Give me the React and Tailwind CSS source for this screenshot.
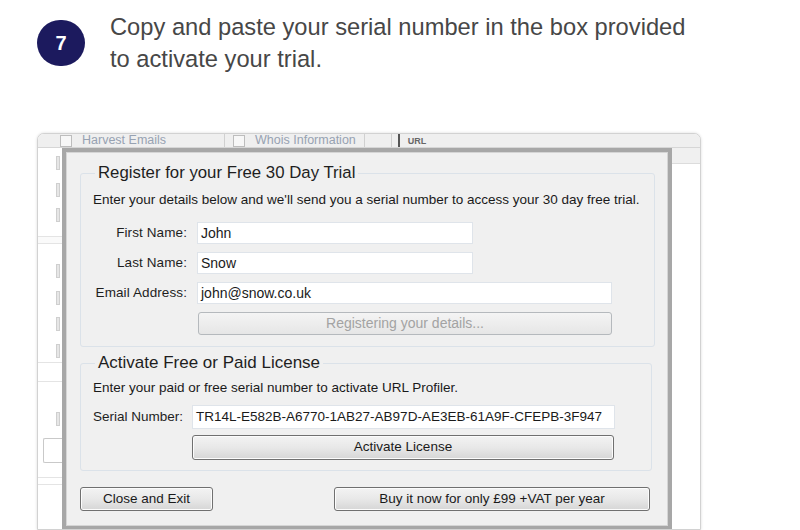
const btn =
  'flex items-center justify-center rounded-[3px] border border-[#707070] bg-gradient-to-b from-[#f3f3f3] via-[#e8e8e8] to-[#d6d6d6] text-[13.5px] text-[#1a1a1a] shadow-[inset_0_0_0_1px_#fcfcfc]';

function Field({ label, value, width }) {
  return (
    <div className="flex items-center h-[22px]">
      <span className="w-[106px] text-right text-[13.5px] tracking-[0.1px] text-[#1e1e1e]">{label}</span>
      <div
        className="ml-[10px] h-[22px] border border-[#dfe4ea] bg-white flex items-center pl-[3px] text-[14px] text-[#1a1a1a]"
        style={{ width }}
      >
        {value}
      </div>
    </div>
  );
}

function Tick({ top }) {
  return <div className="ml-auto mr-[2px] w-[4px] h-[14px] border border-[#cfcfcf] bg-[#e6e6e6]" style={{ marginTop: top }} />;
}

export default function App() {
  return (
    <div className="w-[800px] h-[530px] overflow-hidden bg-white font-['Liberation_Sans',Arial,sans-serif]">
      {/* step heading */}
      <div className="h-[133px] flex items-start pt-[11px] pl-[37px]">
        <div className="mt-[9px] w-[48px] h-[46px] rounded-full bg-[#1c1a5e] flex items-center justify-center text-white font-bold text-[20px]">
          7
        </div>
        <p className="ml-[25px] text-[23.7px] leading-[32px] text-[#474747]">
          Copy and paste your serial number in the box provided
          <br />
          to activate your trial.
        </p>
      </div>

      {/* screenshot of the app */}
      <div className="ml-[37px] w-[664px] h-[397px] border border-[#d2d2d2] rounded-t-[7px] bg-white flex flex-col overflow-hidden shadow-[0_0_3px_rgba(0,0,0,0.15)]">
        <div className="h-[14px] shrink-0 bg-[#efefef] border-b border-[#d6d6d6] flex items-center text-[12.5px] leading-[13px] text-[#97a2b2]">
          <div className="ml-[22px] w-[12px] h-[12px] border border-[#bdbdbd] bg-[#f7f7f7]" />
          <span className="ml-[10px] pr-[58px] border-r border-[#d0d0d0]">Harvest Emails</span>
          <div className="ml-[8px] w-[12px] h-[12px] border border-[#bdbdbd] bg-[#f7f7f7]" />
          <span className="ml-[10px] pr-[8px] border-r border-[#d0d0d0]">Whois Information</span>
          <div className="w-[27px] h-[13px] border-r border-[#d0d0d0]" />
          <div className="w-[8px] h-[13px] border-r-2 border-[#555]" />
          <span className="ml-[8px] text-[#666] text-[9px] leading-[10px] font-bold">URL</span>
        </div>

        <div className="flex flex-1 min-h-0">
          {/* background app left column */}
          <div className="w-[24px] shrink-0 flex flex-col">
            <Tick top={8} />
            <Tick top={13} />
            <Tick top={11} />
            <div className="mt-[14px] h-[8px] border-y border-[#e4e4e4] bg-[#fafafa]" />
            <Tick top={20} />
            <Tick top={13} />
            <Tick top={12} />
            <Tick top={13} />
            <div className="mt-[4px] h-[20px] border-y border-[#e4e4e4]" />
            <Tick top={30} />
            <div className="mt-[12px] ml-[5px] h-[25px] border border-r-0 border-[#c9c9c9] rounded-l-[2px] bg-white" />
            <div className="mt-[14px] h-[8px] border-y border-[#e4e4e4]" />
          </div>

          {/* registration dialog */}
          <div className="w-[610px] shrink-0 border-[4px] border-b-[3px] border-[#a7a7a7] bg-[#f0f0f0] pt-[12px] pl-[14px] pr-[13px] shadow-[inset_0_0_0_1px_#d5d5d5]">
            <fieldset className="w-[575px] border border-[#dbe2e9] rounded-[3px] pl-[12px] pb-[11px]">
              <legend className="ml-[2px] px-[3px] text-[16.8px] leading-[18px] text-[#1e1e1e]">
                Register for your Free 30 Day Trial
              </legend>
              <p className="mt-[10px] text-[13.5px] leading-[16px] text-[#1a1a1a]">
                Enter your details below and we'll send you a serial number to access your 30 day free trial.
              </p>
              <div className="mt-[14px] -ml-[12px] flex flex-col gap-[8px]">
                <Field label="First Name:" value="John" width={276} />
                <Field label="Last Name:" value="Snow" width={276} />
                <Field label="Email Address:" value="john@snow.co.uk" width={415} />
                <div className="ml-[117px] w-[414px] h-[23px] flex items-center justify-center rounded-[3px] border border-[#b5b9bd] bg-gradient-to-b from-[#f4f4f4] to-[#e6e6e6] text-[14px] text-[#a3a3a3]">
                  Registering your details...
                </div>
              </div>
            </fieldset>

            <fieldset className="mt-[7px] w-[572px] border border-[#dbe2e9] rounded-[3px] pl-[12px] pb-[10px]">
              <legend className="ml-[2px] px-[3px] text-[17px] leading-[18px] text-[#1e1e1e]">
                Activate Free or Paid License
              </legend>
              <p className="mt-[8px] text-[13.5px] leading-[16px] text-[#1a1a1a]">
                Enter your paid or free serial number to activate URL Profiler.
              </p>
              <div className="mt-[9px] flex items-center h-[24px]">
                <span className="w-[99px] text-[13.5px] text-[#1e1e1e]">Serial Number:</span>
                <div className="w-[423px] h-[24px] border border-[#dfe4ea] bg-white flex items-center pl-[3px] text-[13.5px] text-[#1a1a1a]">
                  TR14L-E582B-A6770-1AB27-AB97D-AE3EB-61A9F-CFEPB-3F947
                </div>
              </div>
              <div className={`mt-[6px] ml-[99px] w-[422px] h-[25px] ${btn}`}>Activate License</div>
            </fieldset>

            <div className="mt-[16px] flex">
              <div className={`w-[133px] h-[24px] ${btn}`}>Close and Exit</div>
              <div className={`ml-[121px] w-[316px] h-[24px] ${btn}`}>Buy it now for only £99 +VAT per year</div>
            </div>
          </div>

          {/* background app right column */}
          <div className="flex-1 flex flex-col">
            <div className="h-[16px] bg-[#f0f0f0] border-b border-[#dcdcdc]" />
          </div>
        </div>
      </div>
    </div>
  );
}
